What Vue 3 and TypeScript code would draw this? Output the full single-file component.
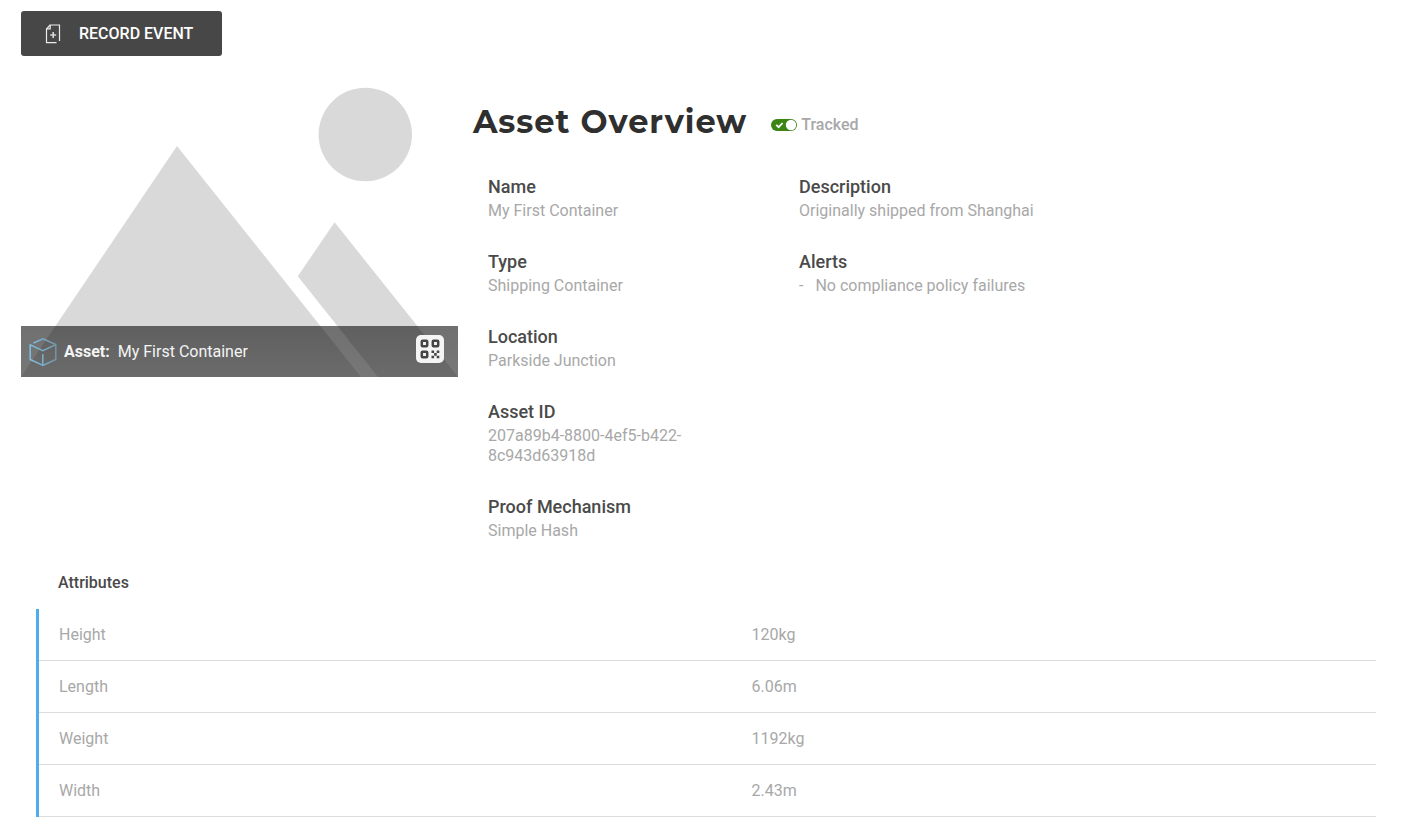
<script setup lang="ts">
import { ref } from 'vue'

interface Field {
  label: string
  value: string
}

interface Attribute {
  name: string
  value: string
}

const tracked = ref<boolean>(true)

const identity: Field[] = [
  { label: 'Name', value: 'My First Container' },
  { label: 'Type', value: 'Shipping Container' },
  { label: 'Location', value: 'Parkside Junction' },
  { label: 'Asset ID', value: '207a89b4-8800-4ef5-b422-8c943d63918d' },
  { label: 'Proof Mechanism', value: 'Simple Hash' },
]

const alerts: string[] = ['No compliance policy failures']

const attributes: Attribute[] = [
  { name: 'Height', value: '120kg' },
  { name: 'Length', value: '6.06m' },
  { name: 'Weight', value: '1192kg' },
  { name: 'Width', value: '2.43m' },
]
</script>

<template>
  <main class="page">
    <button type="button" class="record">
      <svg class="record-icon" width="16" height="20" viewBox="0 0 16 20" fill="none" stroke="#ececec" aria-hidden="true">
        <path d="M11.5 18.6H1.5V5L5 1H14.5V17" stroke-width="1.2" />
        <path d="M5.2 1V4.8H1.5" stroke-width="1.2" />
        <path d="M8.2 8V14M5.2 11H11.2" stroke-width="1.6" stroke="#d8d8d8" />
      </svg>
      <span>RECORD EVENT</span>
    </button>

    <section class="overview">
      <figure class="picture">
        <svg class="placeholder" viewBox="0 0 437 291" fill="#d9d9d9" aria-hidden="true">
          <circle cx="344.3" cy="48.5" r="46.7" />
          <path d="M156 60L340 291H0Z" />
          <path d="M313.6 136.3L437 291H357L276.8 190.3Z" />
        </svg>
        <figcaption class="caption">
          <svg class="cube" width="28" height="30" viewBox="0 0 28 30" fill="none" stroke-width="1.5" aria-hidden="true">
            <defs>
              <linearGradient id="cube-stroke" x1="0" y1="0" x2="1" y2="0">
                <stop offset="0" stop-color="#80c1e2" />
                <stop offset="1" stop-color="#7295a6" />
              </linearGradient>
            </defs>
            <path stroke="url(#cube-stroke)" d="M4.5 6L14 1.8L26.8 7.6V22.4L14 28.4L1.2 22.4V7.8L14 13.6L26.4 7.8" />
            <path stroke="#78b2ce" d="M13.8 17V28" />
          </svg>
          <span class="caption-text"><b>Asset:</b><span>My First Container</span></span>
          <button type="button" class="qr" aria-label="Show QR code">
            <svg width="20" height="20" viewBox="0 0 20 20" aria-hidden="true">
              <g fill="none" stroke="#454545" stroke-width="2.5">
                <rect x="1.8" y="1.8" width="5.4" height="5.4" rx="0.8" />
                <rect x="12.8" y="1.8" width="5.4" height="5.4" rx="0.8" />
                <rect x="1.8" y="12.8" width="5.4" height="5.4" rx="0.8" />
              </g>
              <path fill="#454545" d="M11.5 11.5h2.6v2.6h-2.6zM16.7 11.5h2.6v2.6h-2.6zM14.1 14.1h2.6v2.6h-2.6zM11.5 16.7h2.6v2.6h-2.6zM16.7 16.7h2.6v2.6h-2.6z" />
            </svg>
          </button>
        </figcaption>
      </figure>

      <div class="details">
        <header class="heading">
          <h1>Asset Overview</h1>
          <label class="tracked">
            <input v-model="tracked" type="checkbox" />
            <svg width="26" height="12" viewBox="0 0 26 12" aria-hidden="true">
              <rect width="26" height="12" rx="6" :fill="tracked ? '#3a8514' : '#aaaaaa'" />
              <circle :cx="tracked ? 20 : 6" cy="6" r="5.2" fill="#fff" />
              <path v-if="tracked" d="M5.2 5.8L7.6 8.2L11.6 4" fill="none" stroke="#fff" stroke-width="1.8" />
            </svg>
            <span>Tracked</span>
          </label>
        </header>

        <div class="columns">
          <dl class="fields">
            <div v-for="field in identity" :key="field.label" class="field">
              <dt>{{ field.label }}</dt>
              <dd>{{ field.value }}</dd>
            </div>
          </dl>
          <dl class="fields">
            <div class="field">
              <dt>Description</dt>
              <dd>Originally shipped from Shanghai</dd>
            </div>
            <div class="field">
              <dt>Alerts</dt>
              <dd v-for="alert in alerts" :key="alert" class="alert">
                <span>-</span><span>{{ alert }}</span>
              </dd>
            </div>
          </dl>
        </div>
      </div>
    </section>

    <section class="attributes">
      <h2 id="attributes-title">Attributes</h2>
      <table aria-labelledby="attributes-title">
        <tbody>
          <tr v-for="attribute in attributes" :key="attribute.name">
            <th scope="row">{{ attribute.name }}</th>
            <td>{{ attribute.value }}</td>
          </tr>
        </tbody>
      </table>
    </section>
  </main>
</template>

<style>
body {
  margin: 0;
  background: #fff;
}
</style>

<style scoped>
.page {
  box-sizing: border-box;
  padding: 11px 12px 20px 21px;
  font-family: Roboto, "Liberation Sans", sans-serif;
  font-size: 16px;
  line-height: 20px;
  color: #a8a8a8;
}

.record {
  display: flex;
  align-items: center;
  gap: 18px;
  height: 45px;
  padding: 0 29px 0 24px;
  border: 0;
  border-radius: 3px;
  background: #474747;
  color: #fff;
  font: 500 16px/20px Roboto, "Liberation Sans", sans-serif;
  cursor: pointer;
}

.overview {
  display: grid;
  grid-template-columns: 437fr 933fr;
  align-items: start;
  margin-top: 30px;
}

.picture {
  position: relative;
  margin: 0;
}

.placeholder {
  display: block;
  width: 100%;
}

.caption {
  position: absolute;
  inset: auto 0 0 0;
  box-sizing: border-box;
  display: flex;
  align-items: center;
  height: 51px;
  padding: 0 14px 0 8px;
  background: linear-gradient(rgba(0, 0, 0, 0.56), rgba(50, 50, 50, 0.66));
  color: #f4f4f4;
}

.caption-text {
  display: flex;
  flex: 1;
  gap: 8px;
  margin-left: 7px;
}

.qr {
  display: grid;
  place-items: center;
  width: 28px;
  height: 28px;
  margin-bottom: 5px;
  padding: 0;
  border: 0;
  border-radius: 5px;
  background: #f4f4f4;
  cursor: pointer;
}

.details {
  padding: 16px 0 0 15px;
}

.heading {
  display: flex;
  align-items: center;
  gap: 24px;
}

h1 {
  margin: 0;
  font-family: Montserrat, "DejaVu Sans", sans-serif;
  font-size: 32px;
  font-weight: 700;
  line-height: 40px;
  letter-spacing: 1px;
  color: #2f2f2f;
}

.tracked {
  position: relative;
  display: flex;
  align-items: center;
  gap: 4px;
  padding-top: 5px;
  font-weight: 500;
}

.tracked input {
  position: absolute;
  width: 26px;
  height: 12px;
  margin: 0;
  opacity: 0;
}

.columns {
  display: grid;
  grid-template-columns: repeat(3, 1fr);
  margin: 31px -15px 0 0;
}

.fields {
  display: flex;
  flex-direction: column;
  gap: 27px;
  margin: 0;
  padding: 0 15px;
}

dt {
  font-size: 18px;
  font-weight: 500;
  line-height: 28px;
  color: #4a4a4a;
}

dd {
  margin: 0;
}

.alert {
  display: flex;
  gap: 12px;
}

.attributes {
  margin: 27px 15px 0;
}

h2 {
  margin: 0 0 11px;
  padding: 5px 22px;
  font-size: 16px;
  font-weight: 500;
  line-height: 20px;
  color: #4a4a4a;
}

table {
  width: 100%;
  border-collapse: separate;
  border-spacing: 0;
  border-left: 3px solid #4eaeec;
}

th,
td {
  height: 51px;
  padding: 0 20px;
  border-bottom: 1px solid #dcdcdc;
  font-weight: 400;
  text-align: left;
}

th {
  box-sizing: border-box;
  width: 51.8%;
  height: 52px;
}
</style>
